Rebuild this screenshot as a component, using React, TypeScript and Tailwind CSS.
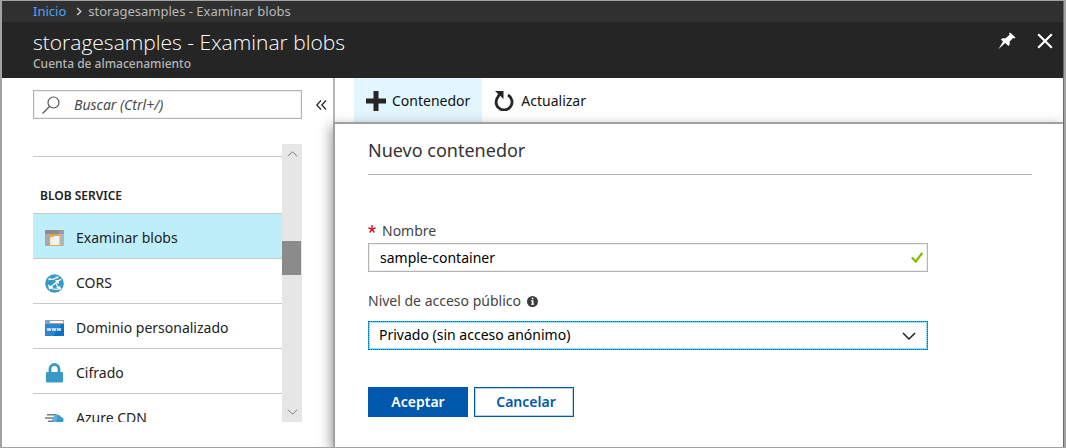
import React from "react";

function BlobIcon() {
  return (
    <svg viewBox="0 0 19 16" className="h-4 w-[19px]" aria-hidden="true">
      <path d="M0 0h19v16H0z" fill="#a9a9a9" />
      <path d="M0 0h19v4H0z" fill="#8c8c8c" />
      <path d="M15 0h4v16H8z" fill="#fff" opacity=".14" />
      <path d="M4 4h4l1 1h6v11H4z" fill="#fba02f" />
      <path d="M5.200 7h3l1-1H14.500v9H5.200z" fill="#f3f3f3" />
    </svg>
  );
}

function CorsIcon() {
  return (
    <svg viewBox="0 0 20 20" className="h-[19px] w-[19px]" aria-hidden="true">
      <circle cx="10" cy="10" r="9.800" fill="#3999c6" />
      <path
        d="M4 5c3 1.500 6 .5 9-1.500M5 14.500 13 8M13 8l4-2.500M11 9.500l3 5M6 15c3 1.500 6 1.500 10 .5"
        fill="none"
        stroke="#fff"
        strokeWidth="1.300"
      />
      <path d="M10.500 6.500 15 6l-1 5zM3 11l1.500 5.500L9 14zM11.500 14.500l4.500-2 1 4z" fill="#fff" />
      <path d="M3 6.500 5 4l2 2zM11 2.500l4 .5-2 2z" fill="#fff" />
    </svg>
  );
}

function DomainIcon() {
  return (
    <svg viewBox="0 0 19 16" className="h-4 w-[19px]" aria-hidden="true">
      <path d="M0 0h19v16H0z" fill="#0b72c6" />
      <path d="M0 0h19v4H0z" fill="#a0a1a2" />
      <path d="M5 1h13v2H5z" fill="#fff" />
      <circle cx="2.500" cy="2" r="1.700" fill="#59b4d9" />
      <path d="M0 4h17L8 16H0z" fill="#fff" opacity=".14" />
      <path
        d="m2 8 1 3 1-3 1 3 1-3m1 0 1 3 1-3 1 3 1-3m1 0 1 3 1-3 1 3 1-3"
        fill="none"
        stroke="#fff"
        strokeWidth=".8"
      />
    </svg>
  );
}

function LockIcon() {
  return (
    <svg viewBox="0 0 19 20" className="h-5 w-[19px]" aria-hidden="true">
      <path d="M5 10V6a4.500 4.500 0 0 1 9 0v4" fill="none" stroke="#3999c6" strokeWidth="2.800" />
      <rect x="1" y="9" width="17" height="10.500" rx="1.200" fill="#3999c6" />
    </svg>
  );
}

function CdnIcon() {
  return (
    <svg viewBox="0 0 19 10" className="h-2.5 w-[19px]" aria-hidden="true">
      <path d="M2 1.700h9M0 5h9M3 8.300h7" stroke="#7a7a7a" strokeWidth="1.500" />
      <path d="M9.500 9.500a2.700 2.700 0 0 1-.8-5A4 4 0 0 1 16 4a2.800 2.800 0 0 1 .5 5.500z" fill="#3999c6" />
      <path d="M9.500 9.500a2.700 2.700 0 0 1-.8-5A4 4 0 0 1 13 1L11 9.500z" fill="#59b4d9" />
    </svg>
  );
}

function Chevron({ className, d }: { className: string; d: string }) {
  return (
    <svg viewBox="0 0 14 8" className={className} fill="none" stroke="currentColor" aria-hidden="true">
      <path d={d} />
    </svg>
  );
}

const items = [
  { label: "Examinar blobs", icon: <BlobIcon />, active: true },
  { label: "CORS", icon: <CorsIcon /> },
  { label: "Dominio personalizado", icon: <DomainIcon /> },
  { label: "Cifrado", icon: <LockIcon /> },
  { label: "Azure CDN", icon: <CdnIcon /> },
];

function Header() {
  return (
    <header className="shrink-0 bg-[#252525]">
      <nav aria-label="Ruta" className="flex h-[21px] items-center bg-[#303030] pl-[31px] text-[13px]">
        <a href="#inicio" className="text-[#4ba6f8]">Inicio</a>
        <svg viewBox="0 0 6 10" className="mr-1.5 ml-2.5 h-[9px] w-[6px]" fill="none" stroke="#d0d0d0" strokeWidth="1.500" aria-hidden="true">
          <path d="m1 1 4 4-4 4" />
        </svg>
        <span className="text-[#b9b9b9]">storagesamples - Examinar blobs</span>
      </nav>
      <div className="flex h-14 items-start justify-between pr-[9px] pl-[31px]">
        <div className="pt-1.5">
          <h1 className="font-['Open_Sans','Noto_Sans',sans-serif] text-[21px] leading-7 font-light text-white">
            storagesamples - Examinar blobs
          </h1>
          <p className="text-xs leading-4 font-medium text-[#b5b5b5]">Cuenta de almacenamiento</p>
        </div>
        <div className="flex gap-5 pt-2.5 text-white">
          <button type="button" aria-label="Anclar">
            <svg viewBox="0 0 18 18" className="h-[18px] w-[18px]" fill="currentColor" aria-hidden="true">
              <path d="m12 .5 5.500 5-1.200 1-1.300-.4-3.500 3.700c.6 1.800 0 3.300-1 4.200L7.200 11 .4 17.300 5 9.500 2.800 7.300c1.400-1 3-1.200 4.500-.7l4.300-3.800-.5-1.300z" />
            </svg>
          </button>
          <button type="button" aria-label="Cerrar">
            <svg viewBox="0 0 18 18" className="h-[18px] w-[18px]" fill="none" stroke="currentColor" strokeWidth="2.200" aria-hidden="true">
              <path d="m2.200 2.200 13.600 13.600m0-13.600L2.200 15.800" />
            </svg>
          </button>
        </div>
      </div>
    </header>
  );
}

function Sidebar() {
  return (
    <aside className="flex w-[331px] shrink-0 flex-col pt-3 pb-[25px] pl-[31px]">
      <div className="flex items-center">
        <label className="flex h-[29px] w-[269px] items-center border border-[#b4b4b4] pl-2 shadow-[inset_0_0_0_1px_#eeeeee]">
          <svg viewBox="0 0 18 18" className="h-[18px] w-[18px]" fill="none" stroke="#555" strokeWidth="1.200" aria-hidden="true">
            <circle cx="11.500" cy="6.500" r="5.500" />
            <path d="m7.500 10.500-7 7" />
          </svg>
          <input
            type="search"
            aria-label="Buscar"
            placeholder="Buscar (Ctrl+/)"
            className="min-w-0 flex-1 bg-transparent px-3.5 text-sm text-[#333] italic outline-none placeholder:text-[#4a4a4a]"
          />
        </label>
        <button type="button" aria-label="Contraer menú" className="ml-3.5">
          <svg viewBox="0 0 11 10" className="h-2.5 w-[11px]" fill="none" stroke="#222" strokeWidth="1.200" aria-hidden="true">
            <path d="M5 .5.8 5 5 9.500M10 .5 5.800 5 10 9.500" />
          </svg>
        </button>
      </div>
      <div className="mt-[25px] flex min-h-0 w-[269px] flex-1">
        <nav aria-label="Configuración" className="min-w-0 flex-1 overflow-hidden pt-3">
          <div className="flex h-[57px] items-end border-t border-[#c8c8c8] pb-[7px] pl-[7px]">
            <h2 className="text-xs leading-5 font-semibold text-[#222]">BLOB SERVICE</h2>
          </div>
          <ul>
            {items.map((item) => (
              <li key={item.label} className="border-t border-[#c8c8c8]">
                <a
                  href="#menu"
                  aria-current={item.active ? "page" : undefined}
                  className={
                    item.active
                      ? "flex h-11 items-center gap-3 bg-[#bfeefb] pt-1 pl-3 text-sm text-[#222]"
                      : "flex h-11 items-center gap-3 pt-1 pl-3 text-sm text-[#222]"
                  }
                >
                  {item.icon}
                  {item.label}
                </a>
              </li>
            ))}
          </ul>
        </nav>
        <div className="flex w-5 shrink-0 flex-col bg-[#e6e6e6] text-[#777]">
          <button type="button" aria-label="Subir" className="flex h-5 items-center justify-center">
            <Chevron className="h-1.5 w-[11px] stroke-[1.3]" d="m1 7 6-6 6 6" />
          </button>
          <div className="grow-[77]" />
          <div className="h-[34px] w-[19px] bg-[#8b8b8b]" />
          <div className="grow-[127]" />
          <button type="button" aria-label="Bajar" className="flex h-5 items-center justify-center">
            <Chevron className="h-1.5 w-[11px] stroke-[1.3]" d="m1 1 6 6 6-6" />
          </button>
        </div>
      </div>
    </aside>
  );
}

function Toolbar() {
  return (
    <div className="flex h-11 shrink-0 border-l-2 border-[#b8b8b8] pl-[19px] text-sm text-[#111]">
      <button type="button" className="flex items-center gap-1.5 bg-[#e2f6fd] px-3 pt-0.5">
        <svg viewBox="0 0 20 20" className="h-5 w-5" fill="#252525" aria-hidden="true">
          <path d="M7.500 0h5v7.500H20v5h-7.500V20h-5v-7.500H0v-5h7.500z" />
        </svg>
        Contenedor
      </button>
      <button type="button" className="flex items-center gap-[7px] pt-0.5 pl-3">
        <svg viewBox="0 0 20 20" className="h-5 w-5" aria-hidden="true">
          <path d="M14 4A8 8 0 1 1 4.500 5.200" fill="none" stroke="#252525" strokeWidth="2.800" />
          <path d="M1 0H9.500V8L6.500 5 4.500 6.500 3 4.500 4.200 3z" fill="#252525" />
        </svg>
        Actualizar
      </button>
    </div>
  );
}

function NewContainer() {
  return (
    <section className="flex-1 border-t-2 border-l-2 border-[#a0a0a0] bg-white pr-[31px] pl-[33px] shadow-[-2px_4px_12px_rgba(0,0,0,0.4)]">
      <h2 className="border-b border-[#b4b4b4] pt-3 pb-2.5 text-lg leading-7 text-[#333]">Nuevo contenedor</h2>
      <form className="max-w-[560px] pt-11 text-sm" onSubmit={(e) => e.preventDefault()}>
        <label htmlFor="nombre" className="flex h-6 items-center gap-1.5 text-[#444]">
          <svg viewBox="0 0 8 8" className="mb-1 h-2 w-2" stroke="#e81123" strokeWidth="1.400" aria-hidden="true">
            <path d="M4 4V0M4 4 .3 2.800M4 4l3.700-1.200M4 4 1.700 7.500M4 4l2.300 3.500" />
          </svg>
          Nombre
        </label>
        <div className="flex h-[29px] items-center border border-[#b4b4b4] pr-1 shadow-[inset_0_0_0_1px_#eeeeee]">
          <input id="nombre" defaultValue="sample-container" className="min-w-0 flex-1 bg-transparent px-[11px] text-black outline-none" />
          <svg viewBox="0 0 12 11" className="h-[11px] w-3" fill="none" stroke="#7fba00" strokeWidth="2.200" aria-hidden="true">
            <path d="m.8 5.500 4 4L11.300.8" />
          </svg>
        </div>
        <div className="mt-[17px] flex h-6 items-center gap-1.5 text-[#444]">
          <label htmlFor="acceso">Nivel de acceso público</label>
          <svg viewBox="0 0 11 11" className="h-[11px] w-[11px]" aria-hidden="true">
            <circle cx="5.500" cy="5.500" r="5.500" fill="#3c3c3c" />
            <path d="M4.700 1.800h1.800v1.500H4.700zM4 4.200h2.500v3.600H7.200v1H4v-1h.8V5.200H4z" fill="#fff" />
          </svg>
        </div>
        <div className="mt-2 grid items-center">
          <select
            id="acceso"
            className="col-start-1 row-start-1 h-[29px] appearance-none border border-[#25b5ef] bg-white px-2.5 pb-0.5 text-black shadow-[inset_0_0_0_1px_#9bdcf7] outline-1 -outline-offset-1 outline-[#16688f] outline-dotted"
          >
            <option>Privado (sin acceso anónimo)</option>
          </select>
          <Chevron className="pointer-events-none col-start-1 row-start-1 mr-3 h-2 w-3.5 justify-self-end stroke-[1.5] text-[#222]" d="m1 1 6 6 6-6" />
        </div>
        <div className="mt-[37px] flex gap-1.5 font-semibold">
          <button type="submit" className="h-[30px] w-[100px] bg-[#0058ad] text-white">Aceptar</button>
          <button type="button" className="h-[30px] w-[100px] border border-[#0058ad] bg-white pl-1 text-[#0058ad] shadow-[inset_0_0_0_1px_#b5d0ea]">
            Cancelar
          </button>
        </div>
      </form>
    </section>
  );
}

export default function App() {
  return (
    <div className="flex h-screen border-y border-r-2 border-l-2 border-[#a2a2a2] bg-white font-['Noto_Sans','Open_Sans',sans-serif]">
      <div className="flex min-w-0 flex-1 flex-col overflow-hidden border-r border-[#2b7bbf]">
        <Header />
        <div className="flex min-h-0 flex-1">
          <Sidebar />
          <main className="flex min-w-0 flex-1 flex-col">
            <Toolbar />
            <NewContainer />
          </main>
        </div>
      </div>
    </div>
  );
}
